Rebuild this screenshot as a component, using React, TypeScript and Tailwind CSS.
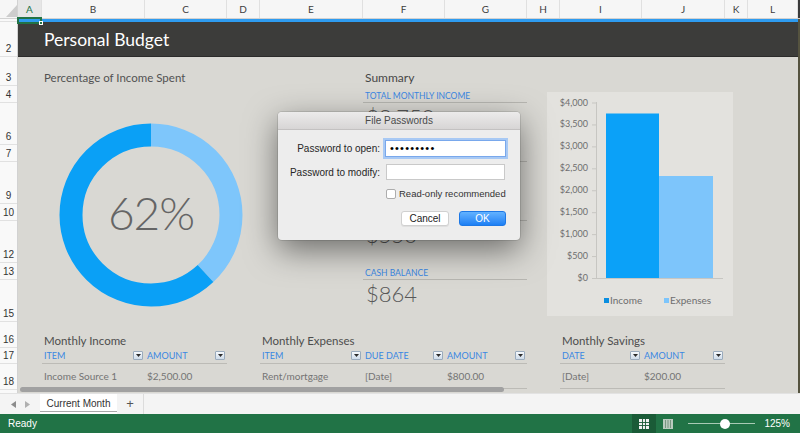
import React from "react";

const cols = [
  { l: "A", w: "w-[24px]" },
  { l: "B", w: "w-[103px]" },
  { l: "C", w: "w-[82px]" },
  { l: "D", w: "w-[33px]" },
  { l: "E", w: "w-[103px]" },
  { l: "F", w: "w-[82px]" },
  { l: "G", w: "w-[82px]" },
  { l: "H", w: "w-[33px]" },
  { l: "I", w: "w-[82px]" },
  { l: "J", w: "w-[83px]" },
  { l: "K", w: "w-[23px]" },
  { l: "L", w: "w-[50px]" },
];

const rows = [
  { n: "", h: "h-[3px]" },
  { n: "2", h: "h-[35px]" },
  { n: "3", h: "h-[29px]" },
  { n: "4", h: "h-[17px]" },
  { n: "6", h: "h-[42px]" },
  { n: "7", h: "h-[17px]" },
  { n: "9", h: "h-[42px]" },
  { n: "10", h: "h-[17px]" },
  { n: "12", h: "h-[42px]" },
  { n: "13", h: "h-[17px]" },
  { n: "15", h: "h-[42px]" },
  { n: "16", h: "h-[26px]" },
  { n: "17", h: "h-[16px]" },
  { n: "18", h: "h-[26px]" },
];

const summary = [
  { label: "Total monthly income", value: "$3,750" },
  { label: "Total monthly expenses", value: "$2,336" },
  { label: "Total monthly savings", value: "$550" },
  { label: "Cash balance", value: "$864" },
];

const ticks = ["$0", "$500", "$1,000", "$1,500", "$2,000", "$2,500", "$3,000", "$3,500", "$4,000"];

function Dropdown() {
  return (
    <span className="w-[10px] h-[9px] flex items-center justify-center bg-gradient-to-b from-[#f6f9fc] to-[#cfdcea] border border-[#9aabbd] rounded-[1px]">
      <svg width="5" height="3" viewBox="0 0 5 3">
        <path d="M0 0h5L2.5 3z" fill="#2b2b2b" />
      </svg>
    </span>
  );
}

type Col = { head: string; value: string; w: string };

function BudgetTable({ title, columns }: { title: string; columns: Col[] }) {
  return (
    <div className="flex flex-col">
      <div className="h-[26px] pt-[12px] pl-[2px] text-[11.5px] leading-[14px] text-[#4d4d4d] whitespace-nowrap">
        {title}
      </div>
      <div className="flex h-[16px] border-b border-[#bcbbb6]">
        {columns.map((c) => (
          <div key={c.head} className={`${c.w} flex items-center justify-between pl-[2px] pr-[2px]`}>
            <span className="text-[9px] text-[#3a87e2]">{c.head}</span>
            <Dropdown />
          </div>
        ))}
      </div>
      <div className="flex h-[25px] border-b border-[#bcbbb6]">
        {columns.map((c) => (
          <div key={c.head} className={`${c.w} pl-[2px] pt-[5px] text-[10px] leading-[14px] text-[#747474]`}>
            {c.value}
          </div>
        ))}
      </div>
    </div>
  );
}

function Donut() {
  const c = 2 * Math.PI * 80;
  const light = c * 0.38;
  return (
    <div className="relative mt-[38px] ml-[15px] w-[184px] h-[184px]">
      <svg width="184" height="184" viewBox="0 0 184 184" className="block">
        <g transform="rotate(-90 92 92)">
          <circle cx="92" cy="92" r="80" fill="none" stroke="#7ec6fb" strokeWidth="23" strokeDasharray={`${light} ${c}`} />
          <circle
            cx="92"
            cy="92"
            r="80"
            fill="none"
            stroke="#0aa0f6"
            strokeWidth="23"
            strokeDasharray={`${c - light} ${c}`}
            strokeDashoffset={-light}
          />
        </g>
      </svg>
      <div className="absolute inset-0 flex items-center justify-center pb-[6px] text-[46px] font-light text-[#656565] tracking-[-1px]">
        62%
      </div>
    </div>
  );
}

function Chart() {
  const step = (186 - 10.5) / 8;
  return (
    <div className="mt-[35px] w-[186px] h-[224px] bg-[#e3e2de]">
      <svg width="186" height="224" className="block" fontFamily="Lato, sans-serif">
        {ticks.map((t, i) => {
          const y = 186 - i * step;
          return (
            <g key={t}>
              <text x="41" y={y + 3} textAnchor="end" fontSize="9" fill="#6e6e6e">
                {t}
              </text>
              <line x1="45" y1={y + 0.5} x2="49" y2={y + 0.5} stroke="#c7c6c2" />
            </g>
          );
        })}
        <line x1="49.5" y1="10" x2="49.5" y2="186" stroke="#c7c6c2" />
        <line x1="49" y1="186.5" x2="176" y2="186.5" stroke="#c7c6c2" />
        <rect x="59" y="21.5" width="53" height="164.5" fill="#0ba1f8" />
        <rect x="112" y="84" width="54" height="102" fill="#7dc5fb" />
        <rect x="57" y="206" width="5" height="5" fill="#0a8ee0" />
        <text x="63" y="212" fontSize="10" fill="#6e6e6e">
          Income
        </text>
        <rect x="117" y="206" width="5" height="5" fill="#7dc5fb" />
        <text x="123" y="212" fontSize="10" fill="#6e6e6e">
          Expenses
        </text>
      </svg>
    </div>
  );
}

function PasswordDialog() {
  return (
    <div className="absolute left-[278px] top-[112px] w-[242px] h-[128px] rounded-[4px] overflow-hidden bg-[#ededed] shadow-[0_10px_32px_rgba(0,0,0,0.5),0_0_0_1px_rgba(0,0,0,0.1)] font-['Liberation_Sans',sans-serif]">
      <div className="h-[18px] bg-gradient-to-b from-[#ecebeb] to-[#d7d5d5] border-b border-[#c3c1c1] flex items-center justify-center text-[10px] text-[#4a4a4a]">
        File Passwords
      </div>
      <div className="grid grid-cols-[102px_121px] gap-x-[5px] pt-[10px] items-center text-[10px] text-[#262626]">
        <span className="text-right whitespace-nowrap">Password to open:</span>
        <div className="h-[17px] bg-white border border-[#79a8ec] shadow-[0_0_0_2px_#a8c9f4] flex items-center pl-[4px] text-[11px] leading-none tracking-[1.2px] text-black">
          •••••••••
        </div>
        <span className="text-right mt-[7px] whitespace-nowrap">Password to modify:</span>
        <div className="h-[16px] mt-[7px] ml-[1px] mr-[1px] bg-white border border-[#c9c9c9]" />
        <div />
        <div className="flex items-center gap-[3px] mt-[9px] ml-[1px] h-[10px] whitespace-nowrap">
          <span className="shrink-0 w-[10px] h-[10px] bg-white border border-[#adadad] rounded-[2px]" />
          <span className="text-[9.5px] text-[#333]">Read-only recommended</span>
        </div>
        <div />
        <div className="flex justify-end gap-[10px] mt-[12px]">
          <div className="w-[48px] h-[15px] bg-white border border-[#d0d0d0] rounded-[3px] flex items-center justify-center text-[#222] shadow-[0_1px_0_rgba(0,0,0,0.06)]">
            Cancel
          </div>
          <div className="w-[47px] h-[15px] bg-gradient-to-b from-[#62b2ff] to-[#1b7ff4] border border-[#1d78e6] rounded-[3px] flex items-center justify-center text-white">
            OK
          </div>
        </div>
      </div>
    </div>
  );
}

export default function App() {
  return (
    <div className="relative w-[800px] h-[433px] overflow-hidden bg-white flex flex-col font-['Lato',sans-serif]">
      {/* column letters */}
      <div className="flex h-[19px] bg-[#f6f6f6] border-b border-[#d2d2d2]">
        <div className="w-[18px] relative border-r border-[#d2d2d2]">
          <svg width="18" height="18" className="absolute left-0 top-0">
            <path d="M6 17L17 17L17 5z" fill="#cdcdcd" />
          </svg>
        </div>
        {cols.map((c) => (
          <div
            key={c.l}
            className={`${c.w} flex items-center justify-center border-r border-[#e0e0e0] text-[10px] ${
              c.l === "A" ? "text-[#217346] bg-[#e6e6e6]" : "text-[#3d3d3d]"
            }`}
          >
            {c.l}
          </div>
        ))}
        <div className="flex-1 bg-[#3a3a3a]" />
      </div>

      <div className="flex h-[374px]">
        {/* row numbers */}
        <div className="w-[18px] flex flex-col bg-[#f9f9f9] border-r border-[#d2d2d2] font-['Liberation_Sans',sans-serif]">
          {rows.map((r, i) => (
            <div
              key={i}
              className={`${r.h} flex items-end justify-center pb-[1px] border-b border-[#e1e1e1] text-[10px] leading-[12px] text-[#333]`}
            >
              {r.n}
            </div>
          ))}
        </div>

        {/* sheet */}
        <div className="relative flex-1 flex flex-col border-r-2 border-[#55533f]">
          <div className="h-[3px] bg-[#2e9bef]" />
          <div className="h-[35px] bg-[#3c3c3a] border-b border-[#2b2b2a] flex items-center pl-[26px] pt-[2px]">
            <span className="text-white text-[17.5px]">Personal Budget</span>
          </div>

          <div className="relative flex-1 flex flex-col bg-[#d9d8d3]">
            <div className="flex h-[265px]">
              <div className="w-[24px]" />
              <div className="w-[218px] pt-[14px] pl-[2px]">
                <div className="text-[11.5px] leading-[14px] text-[#525252]">Percentage of Income Spent</div>
                <Donut />
              </div>
              <div className="w-[103px]" />
              <div className="w-[164px] pt-[12px]">
                <div className="h-[18px] leading-[18px] pl-[2px] text-[12px] text-[#474747]">Summary</div>
                <div className="mt-[2px]">
                  {summary.map((s) => (
                    <div key={s.label} className="h-[59px]">
                      <div className="h-[14px] leading-[14px] border-b border-[#b7b6b1] pl-[2px] text-[8.5px] uppercase text-[#3a87e2]">
                        {s.label}
                      </div>
                      <div className="pl-[3px] mt-[1px] text-[22px] leading-[26px] font-light text-[#585858]">
                        {s.value}
                      </div>
                    </div>
                  ))}
                </div>
              </div>
              <div className="w-[20px]" />
              <Chart />
            </div>

            <div className="flex">
              <div className="w-[24px]" />
              <BudgetTable
                title="Monthly Income"
                columns={[
                  { head: "ITEM", value: "Income Source 1", w: "w-[103px]" },
                  { head: "AMOUNT", value: "$2,500.00", w: "w-[82px]" },
                ]}
              />
              <div className="w-[33px]" />
              <BudgetTable
                title="Monthly Expenses"
                columns={[
                  { head: "ITEM", value: "Rent/mortgage", w: "w-[103px]" },
                  { head: "DUE DATE", value: "[Date]", w: "w-[82px]" },
                  { head: "AMOUNT", value: "$800.00", w: "w-[82px]" },
                ]}
              />
              <div className="w-[33px]" />
              <BudgetTable
                title="Monthly Savings"
                columns={[
                  { head: "DATE", value: "[Date]", w: "w-[82px]" },
                  { head: "AMOUNT", value: "$200.00", w: "w-[83px]" },
                ]}
              />
            </div>

            {/* horizontal scroll bar */}
            <div className="absolute left-[2px] top-[330px] w-[484px] h-[5px] rounded-full bg-[#a1a1a1]" />
          </div>

          {/* selected cell A1 */}
          <div className="absolute left-[-1px] top-[-2px] w-[25px] h-[7px] border-2 border-[#217346]">
            <span className="absolute right-[-3px] bottom-[-3px] w-[4px] h-[4px] bg-[#217346] border border-white" />
          </div>
        </div>
      </div>

      {/* sheet tabs */}
      <div className="flex h-[21px] bg-[#f4f4f4] border-t border-[#e2e2e2]">
        <div className="w-[40px] flex items-center justify-center gap-[9px]">
          <svg width="5" height="7" viewBox="0 0 5 7">
            <path d="M5 0v7L0 3.5z" fill="#8c8c8c" />
          </svg>
          <svg width="5" height="7" viewBox="0 0 5 7">
            <path d="M0 0v7l5-3.5z" fill="#b0b0b0" />
          </svg>
        </div>
        <div className="w-[77px] flex flex-col bg-white">
          <div className="flex-1 flex items-center justify-center pt-[2px] text-[10px] text-[#333] font-['Liberation_Sans',sans-serif]">
            Current Month
          </div>
          <div className="h-[3px] mb-[2px] bg-[#a8a8a8]" />
        </div>
        <div className="w-[27px] flex items-center justify-center border-r border-[#dcdcdc] text-[13px] text-[#555] font-['Liberation_Sans',sans-serif]">
          +
        </div>
      </div>

      {/* status bar */}
      <div className="flex items-center h-[19px] bg-[#217346] text-white text-[10px] font-['Liberation_Sans',sans-serif]">
        <span className="pl-[8px]">Ready</span>
        <div className="ml-auto flex items-center h-full">
          <div className="w-[24px] h-full bg-[#1a5b37] flex items-center justify-center">
            <svg width="10" height="10" viewBox="0 0 10 10">
              <rect x="0.5" y="0.5" width="9" height="9" fill="#f2f2f2" stroke="#f2f2f2" />
              <path d="M3.5 0v10M6.5 0v10M0 3.5h10M0 6.5h10" stroke="#1a5b37" strokeWidth="0.9" />
            </svg>
          </div>
          <svg width="10" height="10" viewBox="0 0 10 10" className="ml-[7px]">
            <rect x="0" y="0" width="10" height="10" fill="#b9cbbf" />
            <path d="M2.5 1v8M5 1v8M7.5 1v8" stroke="#6f8f79" strokeWidth="0.9" />
          </svg>
          <div className="relative ml-[15px] w-[67px] h-[10px] flex items-center">
            <div className="w-full h-[1px] bg-[#a9cbb5]" />
            <span className="absolute left-[32px] top-0 w-[10px] h-[10px] rounded-full bg-white" />
          </div>
          <span className="ml-[9px] mr-[10px]">125%</span>
        </div>
      </div>

      <PasswordDialog />
    </div>
  );
}
